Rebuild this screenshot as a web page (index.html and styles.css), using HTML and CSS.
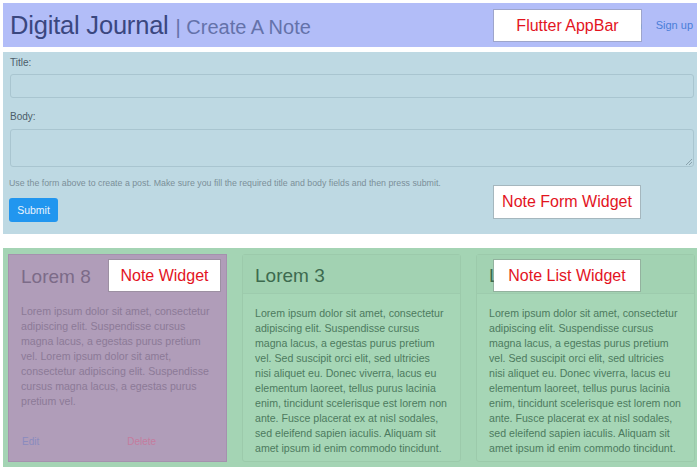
FILE: index.html
```html
<!DOCTYPE html>
<html>
<head>
<meta charset="utf-8">
<link rel="stylesheet" href="styles.css">
</head>
<body>
<div class="page">
  <header class="appbar">
    <div class="brand"><span class="brand-main">Digital Journal</span><span class="brand-sub">| Create A Note</span></div>
    <nav class="nav"><a>Sign in</a><a>Sign up</a></nav>
    <div class="tag tag-appbar">Flutter AppBar</div>
  </header>

  <section class="form">
    <label class="lbl">Title:</label>
    <div class="input"></div>
    <label class="lbl lbl-body">Body:</label>
    <div class="textarea"><span class="grip"></span></div>
    <p class="help">Use the form above to create a post. Make sure you fill the required title and body fields and then press submit.</p>
    <button class="submit">Submit</button>
    <div class="tag tag-form">Note Form Widget</div>
  </section>

  <section class="list">
    <article class="card card-sel">
      <div class="card-head">Lorem 8</div>
      <div class="card-body">Lorem ipsum dolor sit amet, consectetur adipiscing elit. Suspendisse cursus magna lacus, a egestas purus pretium vel. Lorem ipsum dolor sit amet, consectetur adipiscing elit. Suspendisse cursus magna lacus, a egestas purus pretium vel.</div>
      <div class="card-foot"><a class="edit">Edit</a><a class="del">Delete</a></div>
      <div class="tag tag-note">Note Widget</div>
    </article>
    <article class="card">
      <div class="card-head">Lorem 3</div>
      <div class="card-body">Lorem ipsum dolor sit amet, consectetur adipiscing elit. Suspendisse cursus magna lacus, a egestas purus pretium vel. Sed suscipit orci elit, sed ultricies<br>nisi aliquet eu. Donec viverra, lacus eu elementum laoreet, tellus purus lacinia enim, tincidunt scelerisque est lorem non ante. Fusce placerat ex at nisl sodales, sed eleifend sapien iaculis. Aliquam sit amet ipsum id enim commodo tincidunt.</div>
    </article>
    <article class="card">
      <div class="card-head">Lorem 2</div>
      <div class="card-body">Lorem ipsum dolor sit amet, consectetur adipiscing elit. Suspendisse cursus magna lacus, a egestas purus pretium vel. Sed suscipit orci elit, sed ultricies<br>nisi aliquet eu. Donec viverra, lacus eu elementum laoreet, tellus purus lacinia enim, tincidunt scelerisque est lorem non ante. Fusce placerat ex at nisl sodales, sed eleifend sapien iaculis. Aliquam sit amet ipsum id enim commodo tincidunt.</div>
      <div class="tag tag-list">Note List Widget</div>
    </article>
  </section>
</div>
</body>
</html>
```

FILE: styles.css
```css
* { box-sizing: border-box; }
html, body { margin: 0; padding: 0; background: #ffffff; }
body { width: 700px; height: 472px; overflow: hidden; font-family: "Liberation Sans", Arial, sans-serif; }

.page { padding: 3px 3px 0 3px; display: flex; flex-direction: column; }

.tag {
  position: absolute;
  background: #ffffff;
  color: #e3141e;
  font-size: 16px;
  display: flex; align-items: center; justify-content: center;
  box-shadow: 0 0 0 1px rgba(120,120,120,0.35);
  height: 31px;
  z-index: 2;
}

.appbar {
  position: relative;
  height: 44px;
  background: #b2bdf8;
  display: flex; align-items: center; justify-content: space-between;
  padding: 0 4px 0 7px;
}
.brand { display: flex; align-items: baseline; gap: 7px; }
.brand-main { font-size: 25.5px; color: #3a477f; letter-spacing: -0.2px; }
.brand-sub { font-size: 20px; color: #6472aa; }
.nav { display: flex; gap: 14px; font-size: 11px; color: #4a7ed8; }
.tag-appbar { left: 491px; top: 7px; width: 147px; }

.form {
  position: relative;
  margin-top: 5px;
  height: 182px;
  background: #bed9e3;
  padding: 5px 3px 0 7px;
  display: flex; flex-direction: column; align-items: flex-start;
}
.lbl { font-size: 10px; color: #4c5d69; line-height: 12px; }
.input {
  margin-top: 5px; width: 684px; height: 24px;
  border: 1px solid #a9c5d0; border-radius: 3px;
}
.lbl-body { margin-top: 13px; }
.textarea {
  position: relative;
  margin-top: 6px; width: 684px; height: 38px;
  border: 1px solid #a9c5d0; border-radius: 3px;
}
.grip {
  position: absolute; right: 1px; bottom: 1px; width: 6px; height: 6px;
  background: linear-gradient(135deg, transparent 45%, #8aa3ad 45%, #8aa3ad 55%, transparent 55%, transparent 70%, #8aa3ad 70%, #8aa3ad 80%, transparent 80%);
}
.help { margin: 11px 0 0 -1px; font-size: 8.8px; color: #7b8f99; line-height: 10px; }
.submit {
  margin-top: 10px; margin-left: -1px;
  width: 49px; height: 24px;
  background: #2196ef; color: #e8f3fd;
  border: none; border-radius: 3px;
  font-family: inherit; font-size: 10.5px; padding: 0;
}
.tag-form { left: 491px; top: 134px; width: 146px; height: 32px; }

.list {
  margin-top: 14px;
  height: 219px;
  background: #a4d4b4;
  padding: 6px 2px 5px 5px;
  display: flex; gap: 15px;
}
.card {
  position: relative;
  width: 219px;
  border: 1px solid #9ccaab;
  border-radius: 3px;
  background: #a6d6b6;
  display: flex; flex-direction: column;
}
.card-head {
  flex-shrink: 0;
  height: 39px; padding: 3px 12px 0 12px;
  display: flex; align-items: center;
  font-size: 19px; color: #3d6a4f;
  border-bottom: 1px solid #9dcbad;
  background: #a2d2b2;
}
.card-body {
  flex-shrink: 0;
  padding: 12px 9px 0 12px;
  font-size: 10.6px; line-height: 15px; color: #4d7a5e;
}
.card-sel { background: #b09db9; border-color: #a591ae; border-radius: 0; }
.card-sel .card-head { background: transparent; border-bottom: none; color: #7c6b88; padding-top: 4px; }
.card-sel .card-body { color: #8c7a97; padding-top: 10px; padding-right: 6px; }
.card-foot {
  margin-top: auto; height: 40px; padding: 0 13px;
  display: flex; align-items: center; gap: 88px;
  font-size: 10px;
}
.edit { color: #8a8bbf; }
.del { color: #c47c9e; }
.tag-note { left: 100px; top: 5px; width: 111px; }
.tag-list { left: 17px; top: 5px; width: 146px; }
```
